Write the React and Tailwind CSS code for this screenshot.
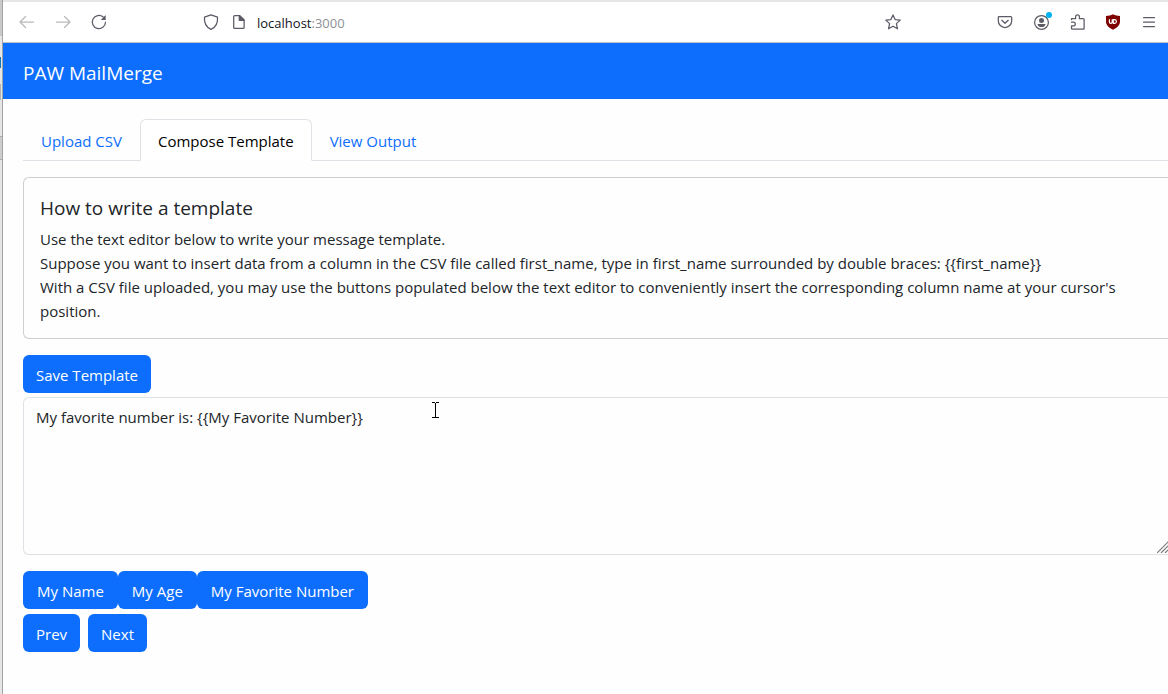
import { useRef, useState } from "react";

const primaryButton =
  "h-[38px] cursor-pointer rounded-md bg-[#0d6efd] pt-0.5 leading-6 text-white hover:bg-[#0b5ed7]";

function Icon({ children, className = "" }) {
  return (
    <svg
      width="16"
      height="16"
      viewBox="0 0 16 16"
      fill="none"
      stroke="currentColor"
      strokeWidth="1.25"
      strokeLinecap="round"
      strokeLinejoin="round"
      aria-hidden="true"
      className={"overflow-visible " + className}
    >
      {children}
    </svg>
  );
}

function ToolButton({ label, muted, narrow, children }) {
  return (
    <button
      type="button"
      aria-label={label}
      className={
        "flex h-9 shrink-0 items-center justify-center " +
        (narrow ? "w-7 " : "w-9 ") +
        (muted ? "text-[#b9b9bc]" : "text-[#5b5b66]")
      }
    >
      <Icon>{children}</Icon>
    </button>
  );
}

function BrowserToolbar() {
  return (
    <div className="flex h-[43px] items-center border-t-2 border-b border-t-[#e6e6e6] border-b-[#c4c4c4] bg-white pr-px pl-1.5">
      <ToolButton label="Back" muted>
        <path d="M14.5 8H1.5M6.5 2.5L1 8l5.500 5.500" />
      </ToolButton>
      <ToolButton label="Forward" muted>
        <path d="M1.500 8h13M9.500 2.500L15 8l-5.500 5.500" />
      </ToolButton>
      <ToolButton label="Reload">
        <path d="M14.500 8.200A6.600 6.600 0 1 1 12.200 3" />
        <path d="M14.700 1v4.900H9.800z" fill="currentColor" stroke="none" />
      </ToolButton>

      <div className="flex min-w-0 flex-1 items-center pr-20 pl-20">
        <ToolButton label="Tracking protection" narrow>
          <path d="M8 .8L14.500 3.200C15 8.500 13 13 8 15.400C3 13 1 8.500 1.500 3.200z" />
        </ToolButton>
        <ToolButton label="Site information" narrow>
          <path d="M3.700 1.600h5.100l4.300 4.300v7.500a1 1 0 0 1-1 1H3.700a1 1 0 0 1-1-1V2.600a1 1 0 0 1 1-1z" />
          <path d="M8.300 1.600v4.700h4.800z" fill="currentColor" />
        </ToolButton>
        <div
          role="textbox"
          aria-label="Address"
          className="min-w-0 flex-1 truncate pt-0.5 pl-1 text-[13px] leading-5 text-[#15141a]"
        >
          localhost<span className="text-[#8f8f96]">:3000</span>
        </div>
        <ToolButton label="Bookmark this page" narrow>
          <path d="M8 .9l2.100 4.700 5.100.5-3.800 3.500 1.100 5.200L8 12.200l-4.500 2.600 1.100-5.200L.8 6.100l5.100-.5z" />
        </ToolButton>
      </div>

      <ToolButton label="Save to Pocket">
        <path d="M2.300 2.500h11.400a1 1 0 0 1 1 1v3.300a6.700 6.700 0 0 1-13.400 0V3.500a1 1 0 0 1 1-1z" />
        <path d="M4.800 6.300L8 9.300l3.200-3" />
      </ToolButton>
      <ToolButton label="Account">
        <circle cx="8.500" cy="8.400" r="6.900" />
        <circle cx="8.500" cy="6.400" r="2.500" fill="currentColor" stroke="none" />
        <path
          d="M4.500 9.900h8c0 1.900-1.800 3.100-4 3.100s-4-1.200-4-3.100z"
          fill="currentColor"
          stroke="none"
        />
        <circle cx="16" cy="1" r="3" fill="#00b3f4" stroke="none" />
      </ToolButton>
      <ToolButton label="Extensions">
        <path d="M2.500 5.500V4.700h4.100V2.800a1.900 1.900 0 0 1 3.800 0v1.900h3.900a.8.800 0 0 1 .8.800v8.900a.8.800 0 0 1-.8.800H3.300a.8.800 0 0 1-.8-.8v-2.600h1.900a1.900 1.900 0 0 0 0-3.800H2.500" />
      </ToolButton>
      <ToolButton label="uBlock Origin">
        <path
          d="M8 .3C10 1.500 12.500 2 15 2v5.500c0 4-3.500 6.500-7 8.200C4.500 14 1 11.500 1 7.500V2C3.500 2 6 1.500 8 .3z"
          fill="#800000"
          stroke="none"
        />
        <path
          d="M4.400 5.700v2.200a1.400 1.400 0 0 0 2.800 0V5.700M8.300 5.700h1.300a1.800 1.800 0 0 1 0 3.600H8.300z"
          stroke="#fff"
          strokeWidth="1.200"
        />
      </ToolButton>
      <ToolButton label="Open menu">
        <path d="M2.500 3.500h11M2.500 8h11M2.500 12.500h11" />
      </ToolButton>
    </div>
  );
}

function Tabs({ tabs, active, onSelect }) {
  return (
    <div role="tablist" className="flex border-b border-[#dee2e6]">
      {tabs.map((tab) => (
        <button
          key={tab}
          type="button"
          role="tab"
          aria-selected={tab === active}
          onClick={() => onSelect(tab)}
          className={
            "-mb-px cursor-pointer rounded-t-md border px-[17px] pt-[9px] pb-[7px] leading-6 " +
            (tab === active
              ? "border-[#dee2e6] border-b-white bg-white text-black"
              : "border-transparent text-[#0d6efd]")
          }
        >
          {tab}
        </button>
      ))}
    </div>
  );
}

function WindowEdge() {
  return (
    <div className="flex w-[3px] shrink-0 flex-col border-r border-[#a3a3a3] bg-[#e6e6e6]" aria-hidden="true">
      <div className="h-9 bg-[#c9c9c9]" />
      <div className="mt-[21px] h-[11px] w-px bg-[#1479b8]" />
      <div className="mt-4 h-4 w-px bg-[#b3b3b3]" />
      <div className="mt-9 h-6 border-y border-[#acacac] bg-[#cdcdcd]" />
    </div>
  );
}

export default function App() {
  const [tab, setTab] = useState("Compose Template");
  const [template, setTemplate] = useState(
    "My favorite number is: {{My Favorite Number}}"
  );
  const editor = useRef(null);

  const insertColumn = (name) => {
    const at = editor.current.selectionStart;
    setTemplate(template.slice(0, at) + "{{" + name + "}}" + template.slice(at));
  };

  return (
    <div className="flex min-h-screen overflow-x-hidden bg-[#fefefe] font-['Open_Sans','Noto_Sans',sans-serif] text-[15px] text-[#212529]">
      <WindowEdge />
      <div className="min-w-0 flex-1">
        <BrowserToolbar />
        <header className="flex h-14 items-center bg-[#0d6efd] px-5">
          <a href="#home" className="pt-1 text-[19px] leading-7 text-white">
            PAW MailMerge
          </a>
        </header>

        <main className="pt-5 pb-10 pl-5">
          <Tabs
            tabs={["Upload CSV", "Compose Template", "View Output"]}
            active={tab}
            onSelect={setTab}
          />

          <section className="mt-4 rounded-l-md border border-r-0 border-[#cfcfd0] px-4 pt-[17px] pb-[15px]">
            <h5 className="mb-1.5 text-[19px] leading-[26px]">
              How to write a template
            </h5>
            <p className="leading-6">
              Use the text editor below to write your message template.
              <br />
              Suppose you want to insert data from a column in the CSV file
              called first_name, type in first_name surrounded by double
              braces: {"{{first_name}}"}
              <br />
              With a CSV file uploaded, you may use the buttons populated below
              the text editor to conveniently insert the corresponding column
              name at your cursor's position.
            </p>
          </section>

          <button type="button" className={"mt-4 block px-[13px] " + primaryButton}>
            Save Template
          </button>

          <div className="relative mt-1">
            <textarea
              ref={editor}
              aria-label="Message template"
              value={template}
              onChange={(e) => setTemplate(e.target.value)}
              spellCheck={false}
              className="block h-[158px] w-full resize-none rounded-l-md border border-r-0 border-[#dee2e6] bg-transparent px-3 pt-[7px] pb-2 leading-6 outline-none"
            />
            <svg
              width="11"
              height="12"
              viewBox="0 0 11 12"
              fill="none"
              stroke="#7a7a7a"
              strokeWidth="1.2"
              aria-hidden="true"
              className="pointer-events-none absolute right-0 bottom-0.5"
            >
              <path d="M0 12L11.500 .5M4 12l7.500-7.500M8 12l3.500-3.500" />
            </svg>
            <svg
              width="7"
              height="17"
              viewBox="0 0 7 17"
              fill="none"
              stroke="#000"
              aria-hidden="true"
              className="pointer-events-none absolute top-[5px] left-[409px]"
            >
              <path d="M0 .5h3M4 .5h3M3.500 1v15M0 15.500h3M4 15.500h3" />
            </svg>
          </div>

          <div className="mt-4 flex">
            {["My Name", "My Age", "My Favorite Number"].map((name) => (
              <button
                key={name}
                type="button"
                onClick={() => insertColumn(name)}
                className={"px-3.5 " + primaryButton}
              >
                {name}
              </button>
            ))}
          </div>
          <div className="mt-[5px] flex gap-2">
            <button type="button" className={"px-[13px] " + primaryButton}>
              Prev
            </button>
            <button type="button" className={"px-[13px] " + primaryButton}>
              Next
            </button>
          </div>
        </main>
      </div>
    </div>
  );
}
